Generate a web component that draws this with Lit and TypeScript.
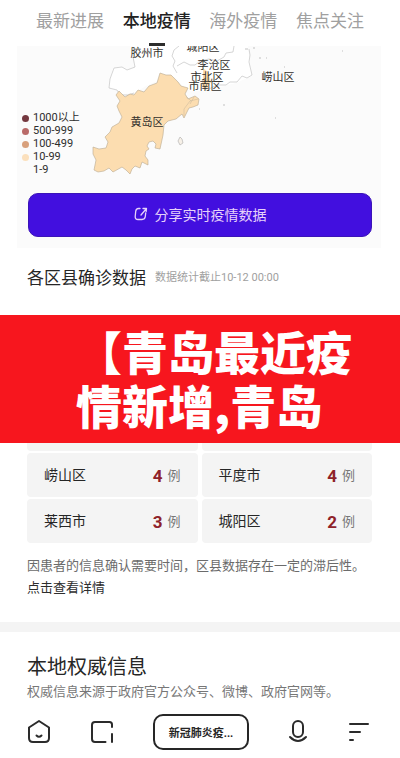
import { LitElement, html, svg, css } from "lit";
import { customElement } from "lit/decorators.js";
import { classMap } from "lit/directives/class-map.js";

const TABS = ["最新进展", "本地疫情", "海外疫情", "焦点关注"];

const LEGEND = [
  { label: "1000以上", tone: "t1" },
  { label: "500-999", tone: "t2" },
  { label: "100-499", tone: "t3" },
  { label: "10-99", tone: "t4" },
  { label: "1-9", tone: "t5" },
];

const LABELS = [
  { name: "胶州市", x: 147, y: 57 },
  { name: "城阳区", x: 203, y: 51 },
  { name: "李沧区", x: 214, y: 69 },
  { name: "市北区", x: 207, y: 81 },
  { name: "市南区", x: 205, y: 90 },
  { name: "崂山区", x: 278, y: 81 },
  { name: "黄岛区", x: 147, y: 126 },
];

const CASES = [
  { area: "崂山区", count: 4 },
  { area: "平度市", count: 4 },
  { area: "莱西市", count: 3 },
  { area: "城阳区", count: 2 },
];

@customElement("district-map")
class DistrictMap extends LitElement {
  static styles = css`
    :host { display: block; background: #fbfbfb; }
    .stack { display: grid; }
    .map, .legend { grid-area: 1 / 1; }
    .map { display: block; width: 100%; height: auto; }
    .label {
      font-family: Roboto, "Noto Sans CJK SC", sans-serif;
      font-size: 11px;
      fill: #33302c;
      text-anchor: middle;
    }
    .legend {
      align-self: end;
      justify-self: start;
      list-style: none;
      margin: 0;
      padding: 0 0 10px 5px;
      font-size: 11px;
      line-height: 13px;
      color: #2d2d2d;
    }
    .item { display: flex; align-items: center; gap: 4px; height: 13px; }
    .dot { width: 7px; height: 7px; border-radius: 50%; margin-top: 2px; }
    .t1 { background: #74383f; }
    .t2 { background: #b96a68; }
    .t3 { background: #d8a07c; }
    .t4 { background: #fbe0bd; }
    .t5 { background: transparent; }
  `;

  render() {
    return html`
      <div class="stack">
        <svg class="map" viewBox="17 46 364 140" role="img" aria-label="青岛各区县地图">
          <path fill="#fff" d="M133 46L135 68L128 70L121 67L113 68L110 79L109 88L117 90L121 94L134 93L146 86L157 81L160 74L175 77L182 86L190 91L205 91L217 88L228 85L236 83L252 76L249 56L248 46Z"/>
          <path fill="none" stroke="#bbb" stroke-width=".6" d="M133 57L135 67L127 70L122 67L114 68L110 79L109 88L117 90L120 95L128 95L134 93M179 46L174 50L172 56L175 61L173 66L177 73M177 66L184 62L190 65L195 65L200 61L209 59L217 61L224 57L226 53L233 52L234 46M249 49L250 55L249 62L252 75L247 78L242 76L237 82L230 82L226 85L217 85L209 89L203 88"/>
          <path fill="#fcddb0" stroke="#b9aa91" stroke-width=".6" d="M119 91L125 97L130 94L134 95L138 90L144 92L149 86L157 83L160 73L166 75L171 75L178 82L181 86L188 88L185 94L188 99L195 96L199 99L198 105L193 107L189 108L184 118L182 114L176 119L168 121L164 125L163 135L160 149L155 148L156 144L153 141L149 142L147 146L149 149L146 151L145 156L148 160L148 165L142 162L140 168L135 166L132 169L130 174L126 170L122 167L113 172L109 168L104 171L98 172L94 170L96 160L93 154L93 147L99 149L106 148L108 142L105 137L110 132L112 127L119 123L122 117L119 111L117 106L120 101L116 95Z"/>
          <path fill="#fcddb0" d="M203 68L208 72L211 82L206 90L201 86L203 80Z"/>
          <path fill="#f7f1e8" stroke="#aaa" stroke-width=".6" d="M180 137L182 139L183 143L180 145L178 141Z"/>
          <path fill="none" stroke="#c6b69d" stroke-width=".5" d="M198 99L190 101L184 109L184 116M187 97L191 101M194 97L190 104"/>
          <path fill="none" stroke="#aaa" stroke-width=".7" d="M245 49h3M253 48h2M259 58h2M266 58h1M284 67h1M342 51h1M223 105h2M199 109h1M275 118h1"/>
          ${LABELS.map((l) => svg`<text class="label" x=${l.x} y=${l.y}>${l.name}</text>`)}
        </svg>
        <ul class="legend">
          ${LEGEND.map((i) => html`<li class="item"><span class=${classMap({ dot: true, [i.tone]: true })}></span>${i.label}</li>`)}
        </ul>
      </div>
      <slot></slot>
    `;
  }
}

@customElement("app-root")
class AppRoot extends LitElement {
  static styles = css`
    :host {
      display: block;
      min-height: 100vh;
      background: #fff;
      color: #262626;
      font-family: Roboto, "Noto Sans CJK SC", sans-serif;
    }
    * { box-sizing: border-box; }
    button { font-family: inherit; cursor: pointer; }
    .tabs { display: flex; justify-content: space-between; padding: 0 36px; }
    .tab {
      position: relative;
      height: 46px;
      padding: 0 0 4px;
      border: 0;
      background: none;
      color: #a0a0a0;
      font-size: 17px;
      line-height: 24px;
      white-space: nowrap;
    }
    .tab.active { color: #222; font-weight: 500; }
    .tab.active::after {
      content: "";
      position: absolute;
      left: 50%;
      bottom: 0;
      width: 16px;
      height: 3px;
      margin-left: -8px;
      background: #2d2d2d;
    }
    .panel { margin: 0 19px 0 17px; padding-bottom: 11px; }
    .share {
      display: flex;
      align-items: center;
      justify-content: center;
      gap: 7px;
      width: calc(100% - 20px);
      height: 44px;
      margin: 7px 9px 0 11px;
      padding: 0 0 2px;
      border: 1px solid #3b14b8;
      border-radius: 10px;
      background: #420fdf;
      color: #e6d2fa;
      font-size: 14px;
    }
    .heading { display: flex; align-items: center; gap: 9px; padding: 17px 27px 0; }
    .title { margin: 0; font-size: 17px; line-height: 26px; font-weight: 400; white-space: nowrap; }
    .date { color: #a0a0a0; font-size: 11px; line-height: 22px; white-space: nowrap; }
    .cases { position: relative; padding: 116px 28px 0 27px; }
    .banner {
      position: absolute;
      top: 24px;
      left: 0;
      right: 0;
      margin: 0;
      padding: 8px 48px 12px 76px;
      background: #f7161e;
      color: #fff;
      font-family: "Noto Sans CJK SC", sans-serif;
      font-size: 46px;
      line-height: 54px;
      font-weight: 900;
    }
    .line { display: block; white-space: nowrap; }
    .grid { display: grid; grid-template-columns: 1fr 1fr; gap: 2px 4px; margin: 0; }
    .card {
      display: flex;
      align-items: center;
      justify-content: space-between;
      height: 44px;
      padding: 0 17px;
      border-radius: 4px;
      background: #f4f4f4;
    }
    .area { font-size: 14px; line-height: 20px; }
    .count { display: flex; align-items: center; gap: 5px; margin: 0; padding-top: 2px; }
    .number { color: #8e2229; font-size: 17px; line-height: 20px; font-weight: 700; }
    .unit { color: #777; font-size: 13px; line-height: 20px; }
    .note { margin: 0; padding: 12px 27px 0; color: #6b6b6b; font-size: 13px; line-height: 22px; white-space: nowrap; }
    .more { display: block; color: #2d2d2d; text-decoration: none; }
    .divider { height: 10px; margin: 23px 0 0; border: 0; background: #f4f4f4; }
    .source { padding: 20px 27px 0; }
    .source-title { margin: 0; font-size: 20px; line-height: 30px; font-weight: 400; }
    .source-text { margin: 0; color: #777; font-size: 13px; line-height: 20px; white-space: nowrap; }
    .bottom { display: flex; align-items: center; justify-content: space-between; padding: 12px 31px 8px 27px; }
    .tool { display: flex; padding: 0; border: 0; background: none; }
    .page {
      height: 36px;
      padding: 0 14px;
      border: 2px solid #262626;
      border-radius: 10px;
      background: #fff;
      color: #262626;
      font-size: 11px;
      font-weight: 700;
      white-space: nowrap;
    }
    .stroke { fill: none; stroke: #2b2b2b; stroke-width: 2; stroke-linecap: round; stroke-linejoin: round; }
    .share-icon { fill: none; stroke: #e6d2fa; stroke-width: 1.3; stroke-linecap: round; stroke-linejoin: round; }
  `;

  render() {
    return html`
      <nav class="tabs">
        ${TABS.map((t, i) => html`<button class=${classMap({ tab: true, active: i === 1 })}>${t}</button>`)}
      </nav>
      <district-map class="panel">
        <button class="share">
          <svg class="share-icon" width="14" height="14" viewBox="0 0 14 14" aria-hidden="true">
            <path d="M6 1.500H4.500Q2 1.500 1.700 4.500L1.200 9.500Q1 12.500 4 12.500H8Q11 12.500 11.300 9.500L11.700 6M7 8L12.500 1.500M9 1.500H12.500L12.200 4.500"/>
          </svg>
          分享实时疫情数据
        </button>
      </district-map>

      <header class="heading">
        <h2 class="title">各区县确诊数据</h2>
        <span class="date">数据统计截止10-12 00:00</span>
      </header>
      <section class="cases">
        <dl class="grid">
          <div class="card"></div>
          <div class="card"></div>
          ${CASES.map((c) => html`
            <div class="card">
              <dt class="area">${c.area}</dt>
              <dd class="count"><span class="number">${c.count}</span><span class="unit">例</span></dd>
            </div>`)}
        </dl>
        <h1 class="banner"><span class="line">【青岛最近疫</span><span class="line">情新增,青岛</span></h1>
      </section>
      <p class="note">因患者的信息确认需要时间，区县数据存在一定的滞后性。<a class="more" href="#detail">点击查看详情</a></p>
      <hr class="divider" />
      <section class="source">
        <h2 class="source-title">本地权威信息</h2>
        <p class="source-text">权威信息来源于政府官方公众号、微博、政府官网等。</p>
      </section>

      <nav class="bottom">
        <button class="tool" aria-label="首页">
          <svg class="stroke" width="24" height="26" viewBox="0 0 24 26">
            <path d="M12 2L2 8.500V19Q2 23 6 23H18Q22 23 22 19V8.500ZM9.500 16.500Q12 19 14.500 16.500"/>
          </svg>
        </button>
        <button class="tool" aria-label="标签页">
          <svg class="stroke" width="24" height="26" viewBox="0 0 24 26">
            <path d="M22 8V5.500Q22 3 19.500 3H5Q2 3 2 6V20Q2 23 5 23H15.500M22 15V23"/>
          </svg>
        </button>
        <button class="page">新冠肺炎疫...</button>
        <button class="tool" aria-label="语音">
          <svg class="stroke" width="22" height="26" viewBox="0 0 22 26">
            <rect x="5" y="2" width="10" height="16" rx="5"/>
            <path d="M2 18Q10 26 18 18"/>
          </svg>
        </button>
        <button class="tool" aria-label="菜单">
          <svg class="stroke" width="20" height="26" viewBox="0 0 20 26">
            <path d="M1 5H19M1 13H11M1 21H4"/>
          </svg>
        </button>
      </nav>
    `;
  }
}
